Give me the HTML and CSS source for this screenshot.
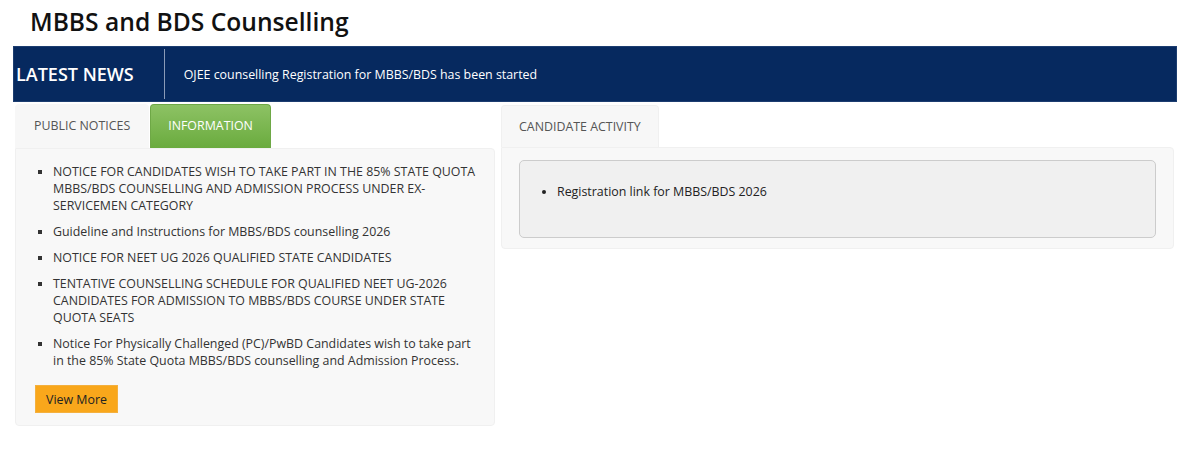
FILE: index.html
```html
<!DOCTYPE html>
<html lang="en">
<head>
    <meta charset="UTF-8">
    <meta name="viewport" content="width=device-width, initial-scale=1.0">
    <title>MBBS and BDS Counselling</title>
    <link rel="stylesheet" href="styles.css">
</head>
<body>
    <div class="container">
        <h1 class="page-title">MBBS and BDS Counselling</h1>

        <div class="news-bar">
            <div class="news-label">LATEST NEWS</div>
            <div class="news-text">OJEE counselling Registration for MBBS/BDS has been started</div>
        </div>

        <div class="panels">
            <div class="panel panel-left">
                <div class="tabs">
                    <div class="tab">PUBLIC NOTICES</div>
                    <div class="tab tab-active">INFORMATION</div>
                </div>
                <div class="panel-body">
                    <ul class="notice-list">
                        <li>NOTICE FOR CANDIDATES WISH TO TAKE PART IN THE 85% STATE QUOTA MBBS/BDS COUNSELLING AND ADMISSION PROCESS UNDER EX-SERVICEMEN CATEGORY</li>
                        <li>Guideline and Instructions for MBBS/BDS counselling 2026</li>
                        <li>NOTICE FOR NEET UG 2026 QUALIFIED STATE CANDIDATES</li>
                        <li>TENTATIVE COUNSELLING SCHEDULE FOR QUALIFIED NEET UG-2026 CANDIDATES FOR ADMISSION TO MBBS/BDS COURSE UNDER STATE QUOTA SEATS</li>
                        <li>Notice For Physically Challenged (PC)/PwBD Candidates wish to take part in the 85% State Quota MBBS/BDS counselling and Admission Process.</li>
                    </ul>
                    <button class="more-btn">View More</button>
                </div>
            </div>

            <div class="panel panel-right">
                <div class="tabs tabs-short">
                    <div class="tab tab-plain">CANDIDATE ACTIVITY</div>
                </div>
                <div class="panel-body">
                    <div class="activity-box">
                        <ul class="activity-list">
                            <li>Registration link for MBBS/BDS 2026</li>
                        </ul>
                    </div>
                </div>
            </div>
        </div>
    </div>
</body>
</html>
```

FILE: styles.css
```css
* {
    margin: 0;
    padding: 0;
    box-sizing: border-box;
}

body {
    font-family: 'Open Sans', 'Liberation Sans', sans-serif;
    background-color: #fff;
    color: #333;
}

.container {
    width: 1164px;
    margin-left: 13px;
}

.page-title {
    font-size: 24.6px;
    font-weight: 600;
    color: #111;
    padding: 4px 0 0 17px;
    height: 46px;
    line-height: 36px;
}

.news-bar {
    display: flex;
    align-items: center;
    height: 56px;
    background-color: #06295f;
    border: 1px solid #1c3d70;
    color: #fff;
}

.news-label {
    font-size: 18px;
    font-weight: 600;
    padding: 0 30px 0 2px;
    height: 50px;
    line-height: 50px;
    border-right: 1px solid #8a9bb8;
}

.news-text {
    font-size: 12.4px;
    padding-left: 19px;
}

.panels {
    display: flex;
    align-items: flex-start;
    padding-left: 2px;
    margin-top: 2px;
    gap: 6px;
}

.panel-left {
    width: 480px;
}

.panel-right {
    width: 673px;
    margin-top: 1px;
}

.tabs {
    display: flex;
    height: 44px;
}

.tabs-short {
    height: 42px;
}

.tab {
    font-size: 12.4px;
    color: #555;
    background-color: #f7f7f7;
    padding: 0 19px;
    line-height: 44px;
    border-radius: 4px 4px 0 0;
}

.tab-active {
    color: #fff;
    margin-left: 1px;
    padding: 0 17px;
    background: linear-gradient(#8dc264, #6aab3e);
    border: 1px solid #6ea846;
    border-bottom: none;
    line-height: 42px;
}

.tab-plain {
    padding: 0 17px;
    line-height: 42px;
    border: 1px solid #f0f0f0;
    border-bottom: none;
}

.panel-body {
    background-color: #f8f8f8;
    border: 1px solid #f0f0f0;
    border-radius: 0 4px 4px 4px;
}

.panel-left .panel-body {
    height: 278px;
    padding: 14px 12px 0 19px;
}

.notice-list {
    list-style: square;
    padding-left: 18px;
    font-size: 12.4px;
    line-height: 17px;
}

.notice-list li {
    margin-bottom: 9px;
}

.more-btn {
    margin-top: 7px;
    font-family: 'Open Sans', 'Liberation Sans', sans-serif;
    font-size: 12.4px;
    color: #222;
    background-color: #f9a71b;
    border: 1px solid #f4b03e;
    padding: 0 10px;
    height: 28px;
    white-space: nowrap;
}

.panel-right .panel-body {
    height: 102px;
    padding: 12px 17px 0 17px;
}

.activity-box {
    background-color: #f0f0f0;
    border: 1px solid #ccc;
    border-radius: 5px;
    height: 78px;
    padding: 22px 0 0 22px;
}

.activity-list {
    list-style: disc;
    padding-left: 15px;
    font-size: 12.4px;
    color: #222;
}
```
